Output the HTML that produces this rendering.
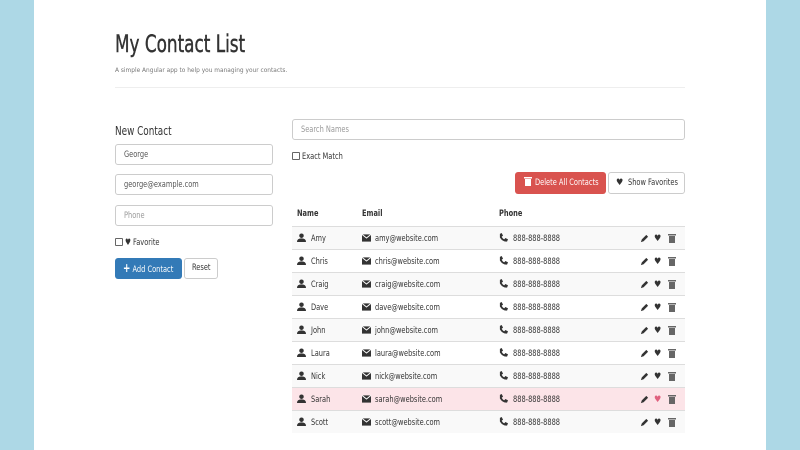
<!DOCTYPE html>
<html><head><meta charset="utf-8"><style>
*{margin:0;padding:0;box-sizing:border-box}
body{width:800px;height:450px;background:#add8e6;position:relative;overflow:hidden;font-family:"Liberation Sans Narrow","DejaVu Sans Condensed","Liberation Sans",sans-serif;color:#333;font-size:9px}
#w{position:absolute;left:34px;top:0;width:732px;height:450px;background:#fff}
.a{position:absolute;white-space:nowrap}
.n{display:inline-block;transform:scaleX(0.82);transform-origin:left center}
.inp{position:absolute;border:1px solid #ccc;border-radius:3px;background:#fff;padding-left:8px;line-height:21px;height:21px;font-size:9px;color:#555;white-space:nowrap}
.ph{color:#999}
.cb{display:inline-block;width:8px;height:8px;border:1px solid #666;border-radius:1px;vertical-align:-1px;margin-right:2px;background:#fff}
.row{position:absolute;left:292px;width:393px;height:23px;border-top:1px solid #ddd}
.row.s{background:#f9f9f9}
.row.p{background:#fce4e8}
.row span{position:absolute;top:7px;font-size:9px;white-space:nowrap}
svg{display:inline-block}
</style></head><body>
<div id="w"></div>
<div class="a" style="left:115px;top:30px;font-size:24px;color:#333;-webkit-text-stroke:0.4px #333"><span class="n" style="transform:scaleX(0.78)">My Contact List</span></div>
<div class="a" style="left:115px;top:66px;font-size:6.5px;color:#777">A simple Angular app to help you managing your contacts.</div>
<div class="a" style="left:115px;top:87px;width:570px;height:1px;background:#eee"></div>
<div class="a" style="left:115px;top:124px;font-size:12px;color:#333"><span class="n">New Contact</span></div>
<div class="inp" style="left:115px;top:144px;width:158px"><span class="n">George</span></div>
<div class="inp" style="left:115px;top:174px;width:158px"><span class="n">george@example.com</span></div>
<div class="inp ph" style="left:115px;top:205px;width:158px"><span class="n">Phone</span></div>
<div class="a" style="left:115px;top:238px;font-size:9px"><span class="cb"></span><span class="n">&#9829; Favorite</span></div>
<div class="a" style="left:115px;top:258px;width:67px;height:21px;background:#337ab7;border-radius:3px;color:#fff;line-height:21px;padding-left:8px;font-size:9px"><span class="n"><b style="font-size:12px">+</b> Add Contact</span></div>
<div class="a" style="left:184px;top:258px;width:34px;height:21px;border:1px solid #ccc;border-radius:3px;line-height:19px;padding-left:7px;font-size:9px"><span class="n">Reset</span></div>
<div class="inp ph" style="left:292px;top:119px;width:393px"><span class="n">Search Names</span></div>
<div class="a" style="left:292px;top:152px"><span class="cb"></span><span class="n">Exact Match</span></div>
<div class="a" style="left:515px;top:172px;width:91px;height:22px;background:#d9534f;border-radius:3px;color:#fff;line-height:22px;padding-left:9px"><svg width="8" height="10" viewBox="0 0 8 10" style="vertical-align:-1px"><rect x="0" y="1" width="8" height="1.5" fill="#fff"/><rect x="1" y="3" width="6" height="7" fill="#fff"/></svg> <span class="n">Delete All Contacts</span></div>
<div class="a" style="left:608px;top:172px;width:77px;height:22px;border:1px solid #ccc;border-radius:3px;line-height:20px;padding-left:7px">&#9829;&nbsp; <span class="n">Show Favorites</span></div>
<div class="a" style="left:297px;top:209px;font-weight:bold"><span class="n">Name</span></div>
<div class="a" style="left:362px;top:209px;font-weight:bold"><span class="n">Email</span></div>
<div class="a" style="left:499px;top:209px;font-weight:bold"><span class="n">Phone</span></div>
<div id="rows"></div>
<script>
var n=["Amy","Chris","Craig","Dave","John","Laura","Nick","Sarah","Scott"],h="";
n.forEach(function(nm,i){var t=226+i*23,c=i==7?"p":(i%2==0?"s":"");
h+='<div class="row '+c+'" style="top:'+t+'px">'+
'<span style="left:5px;top:6px"><svg width="9" height="9" viewBox="0 0 10 10"><circle cx="5" cy="3" r="2.5" fill="#333"/><path d="M0 10 Q0 6 5 6 Q10 6 10 10Z" fill="#333"/></svg></span>'+
'<span style="left:19px"><span class="n" style="position:static">'+nm+'</span></span>'+
'<span style="left:70px;top:7px"><svg width="9" height="8" viewBox="0 0 10 8"><rect width="10" height="8" fill="#333"/><path d="M0 0L5 4L10 0" stroke="#fff" fill="none"/></svg></span>'+
'<span style="left:83px"><span class="n" style="position:static">'+nm.toLowerCase()+'@website.com</span></span>'+
'<span style="left:207px;top:6px"><svg width="9" height="9" viewBox="0 0 10 10"><path d="M1 1L3 0L4.5 3L3 4Q4 6.5 6 7L7 5.5L10 7L9 9.5Q4 10 1 5Z" fill="#333"/></svg></span>'+
'<span style="left:221px"><span class="n" style="position:static">888-888-8888</span></span>'+
'<span style="left:348px;top:7px"><svg width="9" height="9" viewBox="0 0 10 10"><path d="M1 9L2 6L7 1L9 3L4 8Z" fill="#333"/></svg></span>'+
'<span style="left:362px;color:'+(i==7?'#e0607e':'#333')+'">&#9829;</span>'+
'<span style="left:376px;top:6px"><svg width="8" height="10" viewBox="0 0 8 10"><rect x="0" y="1" width="8" height="1.5" fill="#666"/><rect x="1" y="3" width="6" height="7" fill="#666"/></svg></span>'+
'</div>';});
document.getElementById("rows").innerHTML=h;
</script>
</body></html>
